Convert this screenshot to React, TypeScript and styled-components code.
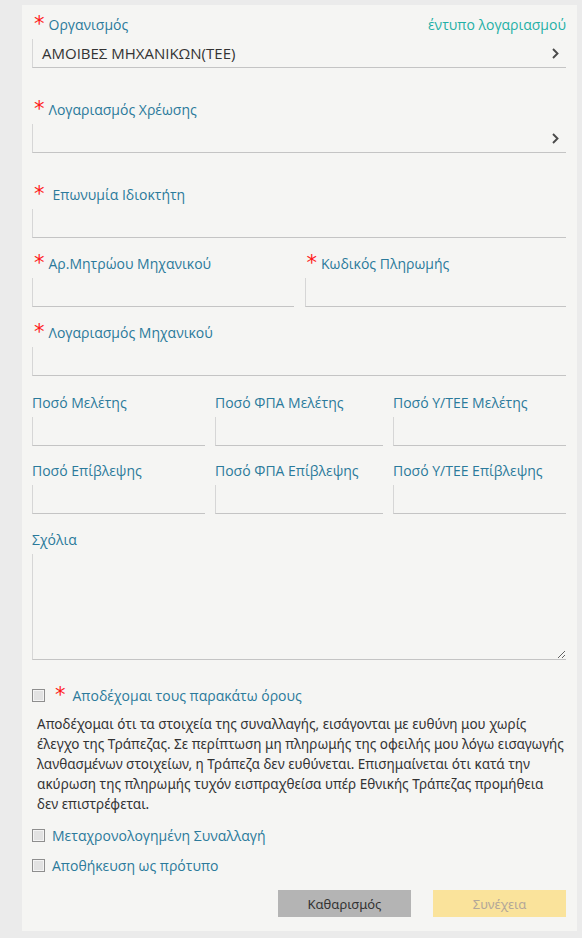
import React from "react";
import styled, { createGlobalStyle } from "styled-components";

const GlobalStyle = createGlobalStyle`
  body {
    margin: 0;
    background: #ebebeb;
    font-family: "Open Sans", "Noto Sans", sans-serif;
  }
`;

const Panel = styled.div`
  margin: 5px 5px 0 22px;
  background: #f5f5f3;
  padding: 9px 11px 14px 10px;
`;

const Field = styled.div<{ gap: number }>`
  margin-bottom: ${props => props.gap}px;
`;

const LabelRow = styled.div`
  display: flex;
  align-items: center;
  justify-content: space-between;
  height: 20px;
  margin-bottom: 5px;
`;

const Label = styled.label<{ indent?: number }>`
  display: flex;
  align-items: center;
  font-size: 14px;
  color: #2b7a9b;
  white-space: nowrap;
  span.txt {
    margin-left: ${props => props.indent || 0}px;
  }
`;

const Star = styled.span`
  align-self: flex-start;
  color: #ff1a1a;
  font-size: 21px;
  line-height: 20px;
  height: 20px;
  padding-left: 2px;
  margin-right: 4px;
  font-family: "DejaVu Sans", sans-serif;
`;

const FormLink = styled.a`
  font-size: 14px;
  color: #1fb0a6;
  text-decoration: none;
`;

const Select = styled.div`
  height: 29px;
  box-sizing: border-box;
  border-left: 1px solid #d6d6d6;
  border-bottom: 1px solid #c4c4c4;
  display: flex;
  align-items: center;
  justify-content: space-between;
  padding: 0 7px 0 9px;
  font-size: 15px;
  color: #333;
`;

const TextInput = styled.input`
  display: block;
  width: 100%;
  height: 29px;
  box-sizing: border-box;
  border: none;
  border-left: 1px solid #d6d6d6;
  border-bottom: 1px solid #c4c4c4;
  background: transparent;
  font-family: inherit;
  font-size: 15px;
  padding: 0 9px;
  &:focus {
    outline: none;
  }
`;

const Grid = styled.div<{ cols: string; gap: number }>`
  display: grid;
  grid-template-columns: ${props => props.cols};
  column-gap: ${props => props.gap}px;
`;

const Comments = styled.textarea`
  display: block;
  width: 100%;
  height: 106px;
  box-sizing: border-box;
  border: none;
  border-left: 1px solid #d6d6d6;
  border-bottom: 1px solid #c4c4c4;
  background: transparent;
  resize: both;
  &:focus {
    outline: none;
  }
`;

const CheckRow = styled.div<{ top: number }>`
  display: flex;
  align-items: center;
  height: 20px;
  margin-top: ${props => props.top}px;
  font-size: 14px;
  color: #2b7a9b;
`;

const Box = styled.span`
  width: 13px;
  height: 13px;
  box-sizing: border-box;
  border: 1px solid #8e8e8e;
  background: #e2e2e2;
  box-shadow: inset 0 0 0 1px #f4f4f4;
  margin-right: 7px;
  flex-shrink: 0;
`;

const CheckStar = styled(Star)`
  align-self: flex-start;
  padding-left: 3px;
  margin-right: 7px;
`;

const Terms = styled.p`
  margin: 9px 0 0 0;
  padding-left: 5px;
  font-family: "Noto Sans", sans-serif;
  font-size: 13.5px;
  line-height: 20px;
  color: #333;
`;

const Buttons = styled.div`
  display: flex;
  justify-content: flex-end;
  gap: 22px;
  margin-top: 15px;
`;

const Button = styled.button<{ primary?: boolean }>`
  width: 133px;
  height: 27px;
  border: none;
  font-family: "Noto Sans", sans-serif;
  font-size: 13px;
  background: ${props => (props.primary ? "#fae39b" : "#b4b4b4")};
  color: ${props => (props.primary ? "#b3a799" : "#333")};
`;

const Chevron = () => (
  <svg width="7" height="11" viewBox="0 0 7 11">
    <path d="M1 1 L5.5 5.5 L1 10" fill="none" stroke="#4a4a4a" strokeWidth="1.9" />
  </svg>
);

const Req = ({ text, indent }: { text: string; indent?: number }) => (
  <Label indent={indent}>
    <Star>*</Star>
    <span className="txt">{text}</span>
  </Label>
);

export default function App() {
  return (
    <>
      <GlobalStyle />
      <Panel>
        <Field gap={31}>
          <LabelRow>
            <Req text="Οργανισμός" />
            <FormLink href="#">έντυπο λογαριασμού</FormLink>
          </LabelRow>
          <Select>
            <span>ΑΜΟΙΒΕΣ ΜΗΧΑΝΙΚΩΝ(ΤΕΕ)</span>
            <Chevron />
          </Select>
        </Field>

        <Field gap={31}>
          <LabelRow>
            <Req text="Λογαριασμός Χρέωσης" />
          </LabelRow>
          <Select>
            <span />
            <Chevron />
          </Select>
        </Field>

        <Field gap={15}>
          <LabelRow>
            <Req text="Επωνυμία Ιδιοκτήτη" indent={4} />
          </LabelRow>
          <TextInput />
        </Field>

        <Grid cols="1fr 1fr" gap={11}>
          <Field gap={15}>
            <LabelRow>
              <Req text="Αρ.Μητρώου Μηχανικού" />
            </LabelRow>
            <TextInput />
          </Field>
          <Field gap={15}>
            <LabelRow>
              <Req text="Κωδικός Πληρωμής" />
            </LabelRow>
            <TextInput />
          </Field>
        </Grid>

        <Field gap={16}>
          <LabelRow>
            <Req text="Λογαριασμός Μηχανικού" />
          </LabelRow>
          <TextInput />
        </Field>

        <Grid cols="173px 168px 173px" gap={10}>
          {["Ποσό Μελέτης", "Ποσό ΦΠΑ Μελέτης", "Ποσό Υ/ΤΕΕ Μελέτης"].map(t => (
            <Field gap={14} key={t}>
              <LabelRow>
                <Label>{t}</Label>
              </LabelRow>
              <TextInput />
            </Field>
          ))}
          {["Ποσό Επίβλεψης", "Ποσό ΦΠΑ Επίβλεψης", "Ποσό Υ/ΤΕΕ Επίβλεψης"].map(t => (
            <Field gap={15} key={t}>
              <LabelRow>
                <Label>{t}</Label>
              </LabelRow>
              <TextInput />
            </Field>
          ))}
        </Grid>

        <Field gap={0}>
          <LabelRow>
            <Label>Σχόλια</Label>
          </LabelRow>
          <Comments />
        </Field>

        <CheckRow top={25}>
          <Box />
          <CheckStar>*</CheckStar>
          <span>Αποδέχομαι τους παρακάτω όρους</span>
        </CheckRow>
        <Terms>
          Αποδέχομαι ότι τα στοιχεία της συναλλαγής, εισάγονται με ευθύνη μου χωρίς έλεγχο της
          Τράπεζας. Σε περίπτωση μη πληρωμής της οφειλής μου λόγω εισαγωγής λανθασμένων στοιχείων,
          η Τράπεζα δεν ευθύνεται. Επισημαίνεται ότι κατά την ακύρωση της πληρωμής τυχόν
          εισπραχθείσα υπέρ Εθνικής Τράπεζας προμήθεια δεν επιστρέφεται.
        </Terms>
        <CheckRow top={11}>
          <Box />
          <span>Μεταχρονολογημένη Συναλλαγή</span>
        </CheckRow>
        <CheckRow top={10}>
          <Box />
          <span>Αποθήκευση ως πρότυπο</span>
        </CheckRow>

        <Buttons>
          <Button>Καθαρισμός</Button>
          <Button primary>Συνέχεια</Button>
        </Buttons>
      </Panel>
    </>
  );
}
